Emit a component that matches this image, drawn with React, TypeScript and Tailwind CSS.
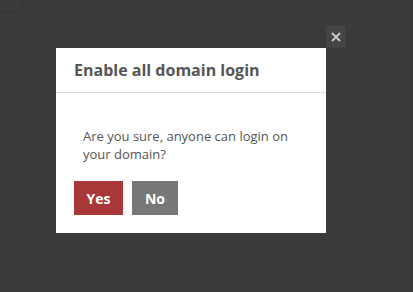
export default function App() {
  return (
    <div
      className="relative h-[292px] w-full overflow-hidden bg-[#3b3b3b] pl-[56px] pt-[48px]"
      style={{ fontFamily: '"Open Sans", "Liberation Sans", sans-serif' }}
    >
      {/* leftover box in corner */}
      <div className="absolute left-0 top-0 h-[12px] w-[23px] border-b border-r border-[#333333]" />

      {/* Modal */}
      <div className="relative w-[270px] bg-white">
        <button className="absolute -top-[22px] -right-[21px] flex h-[22px] w-[21px] items-center justify-center border-r border-[#383838] bg-[#454545] text-[#c8c8c8]">
          <svg width="10" height="10" viewBox="0 0 10 10">
            <path d="M1 1L9 9M9 1L1 9" stroke="currentColor" strokeWidth="2" />
          </svg>
        </button>

        <div className="flex h-[45px] items-center border-b border-[#dcdcdc] px-[18px]">
          <h3 className="text-[16px] font-bold text-[#555555]">Enable all domain login</h3>
        </div>

        <div className="px-[18px] pb-[18px] pt-[34px]">
          <p className="pl-[9px] pr-[9px] text-[13px] leading-[18px] text-[#555555]">
            Are you sure, anyone can login on your domain?
          </p>
          <div className="mt-[18px] flex gap-[9px]">
            <button className="h-[34px] w-[49px] bg-[#a83838] text-[14px] font-bold text-white">Yes</button>
            <button className="h-[34px] w-[46px] bg-[#787878] text-[14px] font-bold text-white">No</button>
          </div>
        </div>
      </div>
    </div>
  );
}
